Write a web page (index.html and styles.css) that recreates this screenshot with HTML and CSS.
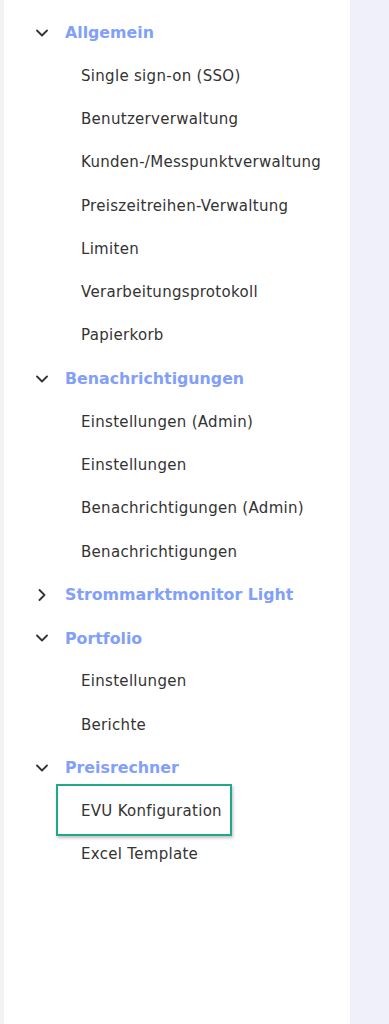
FILE: index.html
```html
<!DOCTYPE html>
<html>
<head>
    <title>Einstellungen</title>
    <link rel="stylesheet" href="styles.css">
</head>
<body>
    <div class="layout">
        <div class="edge"></div>

        <nav class="sidebar">
            <div class="group">
                <div class="group-title">
                    <svg class="chevron" viewBox="0 0 12 12"><polyline points="1,3.5 6,8.5 11,3.5"/></svg>
                    Allgemein
                </div>
                <div class="item">Single sign-on (SSO)</div>
                <div class="item">Benutzerverwaltung</div>
                <div class="item">Kunden-/Messpunktverwaltung</div>
                <div class="item">Preiszeitreihen-Verwaltung</div>
                <div class="item">Limiten</div>
                <div class="item">Verarbeitungsprotokoll</div>
                <div class="item">Papierkorb</div>
            </div>

            <div class="group">
                <div class="group-title">
                    <svg class="chevron" viewBox="0 0 12 12"><polyline points="1,3.5 6,8.5 11,3.5"/></svg>
                    Benachrichtigungen
                </div>
                <div class="item">Einstellungen (Admin)</div>
                <div class="item">Einstellungen</div>
                <div class="item">Benachrichtigungen (Admin)</div>
                <div class="item">Benachrichtigungen</div>
            </div>

            <div class="group">
                <div class="group-title">
                    <svg class="chevron" viewBox="0 0 12 12"><polyline points="3.5,1 8.5,6 3.5,11"/></svg>
                    Strommarktmonitor Light
                </div>
            </div>

            <div class="group">
                <div class="group-title">
                    <svg class="chevron" viewBox="0 0 12 12"><polyline points="1,3.5 6,8.5 11,3.5"/></svg>
                    Portfolio
                </div>
                <div class="item">Einstellungen</div>
                <div class="item">Berichte</div>
            </div>

            <div class="group">
                <div class="group-title">
                    <svg class="chevron" viewBox="0 0 12 12"><polyline points="1,3.5 6,8.5 11,3.5"/></svg>
                    Preisrechner
                </div>
                <div class="item marked">EVU Konfiguration</div>
                <div class="item">Excel Template</div>
            </div>
        </nav>

        <main class="content"></main>
    </div>
</body>
</html>
```

FILE: styles.css
```css
body {
    margin: 0;
    font-family: "DejaVu Sans", sans-serif;
}
.layout {
    display: flex;
    height: 1024px;
}
.edge {
    width: 4px;
    background: #f2f2f2;
}
.sidebar {
    width: 346px;
    background: #fff;
    padding-top: 11px;
}
.content {
    flex: 1;
    background: #f0f0fa;
}
.group-title {
    display: flex;
    align-items: center;
    height: 43.26px;
    padding-left: 32px;
    font-size: 15.8px;
    font-weight: 700;
    color: #82a0fa;
}
.chevron {
    width: 12px;
    height: 12px;
    margin-right: 17px;
    fill: none;
    stroke: #333;
    stroke-width: 1.8;
    stroke-linecap: round;
    stroke-linejoin: round;
}
.item {
    position: relative;
    display: flex;
    align-items: center;
    height: 43.26px;
    margin-left: 52px;
    padding-left: 25px;
    font-size: 15px;
    letter-spacing: 0.3px;
    color: #333;
}
.item.marked::after {
    content: "";
    position: absolute;
    left: 0;
    top: -6px;
    width: 176px;
    bottom: -3px;
    border: 2px solid #1fa98a;
    box-sizing: border-box;
    box-shadow: 1px 2px 3px rgba(0, 0, 0, 0.25);
}
```
